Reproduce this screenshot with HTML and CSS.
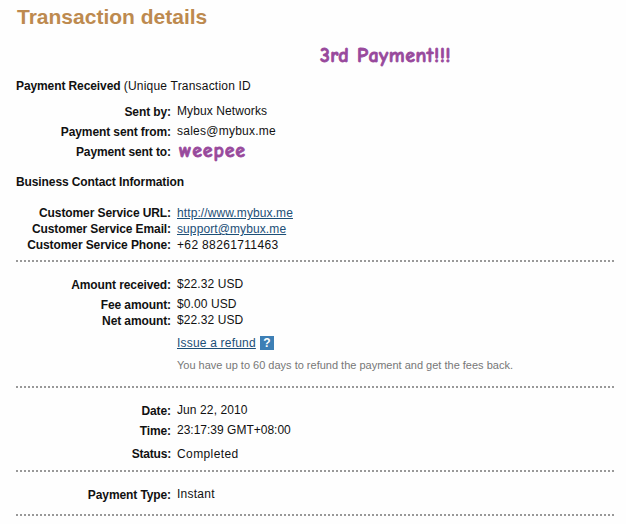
FILE: index.html
```html
<!DOCTYPE html>
<html lang="en">
<head>
    <meta charset="UTF-8">
    <meta name="viewport" content="width=device-width, initial-scale=1.0">
    <title>Transaction details</title>
    <link rel="stylesheet" href="styles.css">
</head>
<body>

<div class="container">
    <h1>Transaction details</h1>
    <div class="note">3rd Payment!!!</div>

    <p class="received"><b>Payment Received</b> <span>(Unique Transaction ID</span></p>

    <dl class="sender">
        <dt>Sent by:</dt><dd>Mybux Networks</dd>
        <dt>Payment sent from:</dt><dd class="sales">sales@mybux.me</dd>
        <dt>Payment sent to:</dt><dd class="nickname">weepee</dd>
    </dl>

    <h2>Business Contact Information</h2>

    <dl class="contact">
        <dt>Customer Service URL:</dt><dd><a href="#">http://www.mybux.me</a></dd>
        <dt>Customer Service Email:</dt><dd><a href="#">support@mybux.me</a></dd>
        <dt>Customer Service Phone:</dt><dd class="phone">+62 88261711463</dd>
    </dl>

    <hr>

    <dl class="amounts">
        <dt class="first">Amount received:</dt><dd class="first">$22.32 USD</dd>
        <dt>Fee amount:</dt><dd>$0.00 USD</dd>
        <dt>Net amount:</dt><dd>$22.32 USD</dd>
    </dl>
    <div class="refund">
        <a href="#">Issue a refund</a>
        <span class="help">?</span>
    </div>
    <p class="hint">You have up to 60 days to refund the payment and get the fees back.</p>

    <hr>

    <dl class="status">
        <dt>Date:</dt><dd>Jun 22, 2010</dd>
        <dt>Time:</dt><dd class="time">23:17:39 GMT+08:00</dd>
        <dt class="last">Status:</dt><dd class="last">Completed</dd>
    </dl>

    <hr>

    <dl class="type">
        <dt>Payment Type:</dt><dd>Instant</dd>
    </dl>

    <hr>
</div>

</body>
</html>
```

FILE: styles.css
```css
body {
    margin: 0;
    background-color: #fefefe;
    font-family: Arial, "Liberation Sans", sans-serif;
    font-size: 12px;
    line-height: 16px;
    color: #111;
}

.container {
    width: 600px;
    padding: 5px 0 0 16px;
}

h1, h2, p, dl, dd {
    margin: 0;
}

h1 {
    padding-left: 1px;
    font-size: 21px;
    line-height: 24px;
    color: #bd8a4f;
}

.note, .nickname {
    font-family: "Comic Sans MS", "Comic Neue", Lato, sans-serif;
    font-weight: bold;
    color: #98499c;
    -webkit-text-stroke: 0.8px #98499c;
}

.note {
    margin: 14px 0 0 304px;
    font-size: 20px;
    line-height: 26px;
    letter-spacing: 0.5px;
}

.received {
    margin: 9px 0 10px;
}

.received b, h2, dt {
    letter-spacing: -0.1px;
}

.received span {
    letter-spacing: 0.2px;
}

h2 {
    margin: 14px 0 15px;
    font-size: 12px;
    line-height: 16px;
}

dl {
    display: grid;
    grid-template-columns: 155px 1fr;
    column-gap: 6px;
}

dt {
    font-weight: bold;
    text-align: right;
}

dd {
    height: 16px;
    margin-top: -1px;
    letter-spacing: 0.1px;
}

a {
    color: #1c4f77;
}

.sender {
    row-gap: 4px;
}

.sender .sales {
    letter-spacing: 0.25px;
}

.sender .nickname {
    margin-left: 2px;
    font-size: 20px;
    letter-spacing: 0.8px;
}

.contact dd {
    margin-top: 0;
}

.contact .phone {
    letter-spacing: 0.35px;
}

hr {
    height: 2px;
    margin: 7px 0 14px;
    border: none;
    background: repeating-linear-gradient(to right, #999 0, #999 2px, #fefefe 2px, #fefefe 4px);
}

.amounts {
    margin-top: 15px;
}

.amounts .first {
    margin-bottom: 4px;
}

.refund {
    display: flex;
    align-items: center;
    gap: 4px;
    margin: 6px 0 0 161px;
    height: 16px;
}

.refund a {
    letter-spacing: 0.2px;
}

.help {
    width: 14px;
    height: 14px;
    background-color: #3d7fb5;
    color: #fff;
    font-weight: bold;
    line-height: 14px;
    text-align: center;
}

.hint {
    margin: 6px 0 13px 161px;
    font-size: 11px;
    color: #777;
}

.status {
    row-gap: 4px;
    margin: 15px 0 8px;
}

.status .time {
    letter-spacing: 0;
}

.status .last {
    margin-top: 3px;
    letter-spacing: 0.1px;
}

.status dd.last {
    letter-spacing: 0.4px;
}

.status dt.last {
    letter-spacing: -0.2px;
}

.type {
    margin: 15px 0 11px;
}

.type dd {
    letter-spacing: 0.25px;
}
```
